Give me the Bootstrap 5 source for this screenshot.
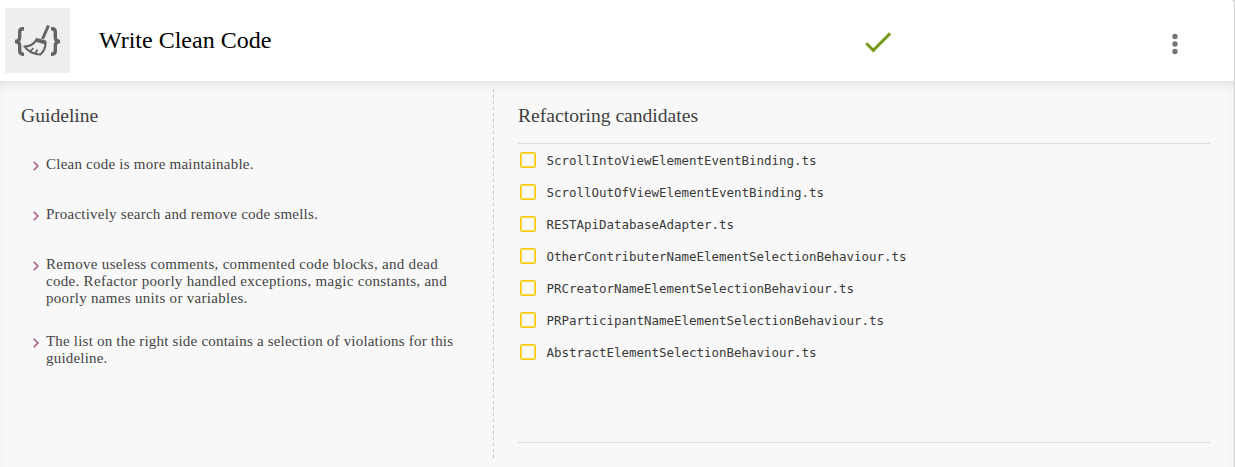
<!DOCTYPE html>
<html lang="en">
<head>
<meta charset="utf-8">
<meta name="viewport" content="width=device-width, initial-scale=1">
<title>Write Clean Code</title>
<link href="https://cdn.jsdelivr.net/npm/bootstrap@5.3.0/dist/css/bootstrap.min.css" rel="stylesheet">
<style>
  body { font-family: "Liberation Serif", serif; background: #d2d2d2; }
  .panel { width: 1234px; height: 467px; background: #f8f8f8; border-top-right-radius: 4px; overflow: hidden; }
  .panel-top { height: 81px; background: #fff; padding: 0 52px 0 5px; }
  .logo { width: 65px; height: 65px; background: #eee; }
  .panel-top h1 { font-size: 24px; line-height: 28px; color: #000; margin: -2px 0 0 29px; width: 765px; }
  .tick { margin-top: 2px; }
  .dots { margin-top: 6px; }
  .panel-body { box-shadow: inset 0 12px 12px -10px rgba(0,0,0,.11), inset -8px 0 12px -8px rgba(0,0,0,.03), inset 8px 0 12px -8px rgba(0,0,0,.03); padding: 8px 24px 8px 21px; }
  .side { width: 472px; }
  .side, .main-side { padding-top: 15px; }
  .main-side h2 { margin-bottom: 15px; }
  .dash { width: 1px; background: repeating-linear-gradient(#c6c6c6 0 3px, transparent 3px 6px); }
  h2 { font-size: 19.6px; line-height: 24px; color: #3f3f3f; }
  .rules { font-size: 15px; line-height: 17px; letter-spacing: .23px; color: #444; margin: 28px 0 0 12px; width: 430px; gap: 33px; }
  .rules li:nth-child(3) { letter-spacing: .3px; }
  .rules li:last-child { margin-top: -7px; letter-spacing: .2px; }
  .rules span { max-width: 412px; }
  .rules svg { margin: 5px 7px 0 0; }
  .files { height: 300px; border-top: 1px solid #dedede; border-bottom: 1px solid #dedede; font: 12.5px/16px "DejaVu Sans Mono", monospace; letter-spacing: -.025px; color: #3a3a3a; }
  .files label { height: 32px; }
  .files span { padding-top: 2px; }
  .files .form-check-input { width: 16px; height: 16px; margin: 0 10.500px 0 2px; border: 1px solid #ffcb05; border-radius: 2px; background-color: transparent; box-shadow: inset 0 0 0 1px #ffd84d; }
</style>
</head>
<body>
<main class="panel d-flex flex-column">
  <header class="panel-top d-flex align-items-center flex-shrink-0">
    <div class="logo d-flex align-items-center justify-content-center">
      <svg width="65" height="65" viewBox="0 0 65 65" fill="none" stroke="#646464" stroke-width="3.400">
        <path d="M19 20.800h-1q-3.300 0-3.300 3.200v5q0 4.500-4.700 4.500 4.700 0 4.700 4.500v4.500q0 3.700 3.300 3.700H19M46 20.800h1q3.300 0 3.300 3.200v5q0 4.500 4.700 4.500-4.700 0-4.700 4.500v4.500q0 3.700-3.300 3.700H46"/>
        <path stroke-width="3" d="M43.500 17.500 37.500 31"/>
        <path stroke-width="2.200" stroke-linejoin="round" d="M31.500 31.800 40.500 34.500C41 38 39 43.500 35.500 46.500 29 46.500 22.500 43 19.500 38.500 25 38.500 29 35.500 31.500 31.800Z"/>
        <path stroke-width="4" d="m30.500 31.700 10.500 3"/>
        <path stroke-width="1.700" d="m25 43.500 3.500-3.500M30 46l2.500-4.500"/>
      </svg>
    </div>
    <h1 class="fw-normal">Write Clean Code</h1>
    <svg class="tick" width="28" height="24" viewBox="0 0 28 24" fill="none" stroke="#7a9a1d" stroke-width="3"><path d="m2.300 13.300 7 7L26.200 3.400"/></svg>
    <svg class="dots ms-auto" width="14" height="24" viewBox="0 0 14 24" fill="#757575"><circle cx="7" cy="4.500" r="2.700"/><circle cx="7" cy="12" r="2.700"/><circle cx="7" cy="19.500" r="2.700"/></svg>
  </header>
  <div class="panel-body d-flex flex-grow-1">
    <section class="side">
      <h2 class="fw-normal mb-0">Guideline</h2>
      <ul class="rules list-unstyled d-flex flex-column mb-0">
        <li class="d-flex align-items-start"><svg class="flex-shrink-0" width="6" height="10" viewBox="0 0 6 10" fill="none" stroke="#a55d88" stroke-width="1.600"><path d="m.7.800 4.200 4.200L.7 9.200"/></svg><span>Clean code is more maintainable.</span></li>
        <li class="d-flex align-items-start"><svg class="flex-shrink-0" width="6" height="10" viewBox="0 0 6 10" fill="none" stroke="#a55d88" stroke-width="1.600"><path d="m.7.800 4.200 4.200L.7 9.200"/></svg><span>Proactively search and remove code smells.</span></li>
        <li class="d-flex align-items-start"><svg class="flex-shrink-0" width="6" height="10" viewBox="0 0 6 10" fill="none" stroke="#a55d88" stroke-width="1.600"><path d="m.7.800 4.200 4.200L.7 9.200"/></svg><span>Remove useless comments, commented code blocks, and dead code. Refactor poorly handled exceptions, magic constants, and poorly names units or variables.</span></li>
        <li class="d-flex align-items-start"><svg class="flex-shrink-0" width="6" height="10" viewBox="0 0 6 10" fill="none" stroke="#a55d88" stroke-width="1.600"><path d="m.7.800 4.200 4.200L.7 9.200"/></svg><span>The list on the right side contains a selection of violations for this guideline.</span></li>
      </ul>
    </section>
    <div class="dash"></div>
    <section class="main-side flex-grow-1 ms-4">
      <h2 class="fw-normal">Refactoring candidates</h2>
      <div class="files">
        <label class="d-flex align-items-center"><input class="form-check-input" type="checkbox"><span>ScrollIntoViewElementEventBinding.ts</span></label>
        <label class="d-flex align-items-center"><input class="form-check-input" type="checkbox"><span>ScrollOutOfViewElementEventBinding.ts</span></label>
        <label class="d-flex align-items-center"><input class="form-check-input" type="checkbox"><span>RESTApiDatabaseAdapter.ts</span></label>
        <label class="d-flex align-items-center"><input class="form-check-input" type="checkbox"><span>OtherContributerNameElementSelectionBehaviour.ts</span></label>
        <label class="d-flex align-items-center"><input class="form-check-input" type="checkbox"><span>PRCreatorNameElementSelectionBehaviour.ts</span></label>
        <label class="d-flex align-items-center"><input class="form-check-input" type="checkbox"><span>PRParticipantNameElementSelectionBehaviour.ts</span></label>
        <label class="d-flex align-items-center"><input class="form-check-input" type="checkbox"><span>AbstractElementSelectionBehaviour.ts</span></label>
      </div>
    </section>
  </div>
</main>
<script src="https://cdn.jsdelivr.net/npm/bootstrap@5.3.0/dist/js/bootstrap.bundle.min.js"></script>
</body>
</html>
